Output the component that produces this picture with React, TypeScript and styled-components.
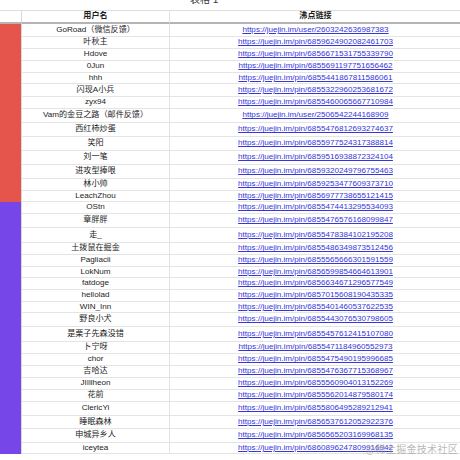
import React from "react";
import styled, { createGlobalStyle } from "styled-components";

const GlobalStyle = createGlobalStyle`
  html, body { margin: 0; padding: 0; background: #ffffff; overflow: hidden; }
  body { font-family: "Liberation Sans", "Noto Sans CJK SC", sans-serif; }
`;

type Entry = { name: string; url: string; h: number; group: "red" | "purple" };

const rows: Entry[] = [
  { name: "GoRoad（微信反馈）", url: "https://juejin.im/user/2603242636987383", h: 13, group: "red" },
  { name: "叶秋主", url: "https://juejin.im/pin/6859624902082461703", h: 12, group: "red" },
  { name: "Hdove", url: "https://juejin.im/pin/6856671531755339790", h: 12, group: "red" },
  { name: "0Jun", url: "https://juejin.im/pin/6855691197751656462", h: 12, group: "red" },
  { name: "hhh", url: "https://juejin.im/pin/6855441867811586061", h: 11, group: "red" },
  { name: "闪现A小兵", url: "https://juejin.im/pin/6855322960253681672", h: 13, group: "red" },
  { name: "zyx94", url: "https://juejin.im/pin/6855460065667710984", h: 12, group: "red" },
  { name: "Vam的金豆之路（邮件反馈）", url: "https://juejin.im/user/2506542244168909", h: 14, group: "red" },
  { name: "西红柿炒蛋", url: "https://juejin.im/pin/6855476812693274637", h: 14, group: "red" },
  { name: "笑阳", url: "https://juejin.im/pin/6855977524317388814", h: 14, group: "red" },
  { name: "刘一笔", url: "https://juejin.im/pin/6859516938872324104", h: 14, group: "red" },
  { name: "进攻型捧哏", url: "https://juejin.im/pin/6859320249796755463", h: 14, group: "red" },
  { name: "林小帅", url: "https://juejin.im/pin/6859253477609373710", h: 12, group: "red" },
  { name: "LeachZhou", url: "https://juejin.im/pin/6856977738655121415", h: 11, group: "red" },
  { name: "OStn", url: "https://juejin.im/pin/6855474413295534093", h: 12, group: "purple" },
  { name: "章胖胖", url: "https://juejin.im/pin/6855476576168099847", h: 14, group: "purple" },
  { name: "走_", url: "https://juejin.im/pin/6855478384102195208", h: 15, group: "purple" },
  { name: "土拨鼠在掘金", url: "https://juejin.im/pin/6855486349873512456", h: 12, group: "purple" },
  { name: "Pagliacii", url: "https://juejin.im/pin/6855565666301591559", h: 12, group: "purple" },
  { name: "LokNum", url: "https://juejin.im/pin/6856599854664613901", h: 11, group: "purple" },
  { name: "fatdoge", url: "https://juejin.im/pin/6856634671296577549", h: 12, group: "purple" },
  { name: "hellolad", url: "https://juejin.im/pin/6857015608190435335", h: 12, group: "purple" },
  { name: "WIN_Inn", url: "https://juejin.im/pin/6855401460537622535", h: 11, group: "purple" },
  { name: "野良小犬", url: "https://juejin.im/pin/6855443076530798605", h: 14, group: "purple" },
  { name: "是栗子先森没错", url: "https://juejin.im/pin/6855457612415107080", h: 15, group: "purple" },
  { name: "卜宁呀", url: "https://juejin.im/pin/6855471184960552973", h: 12, group: "purple" },
  { name: "chor", url: "https://juejin.im/pin/6855475490195996685", h: 12, group: "purple" },
  { name: "吉哈达", url: "https://juejin.im/pin/6855476367715368967", h: 12, group: "purple" },
  { name: "JIIllheon", url: "https://juejin.im/pin/6855560904013152269", h: 12, group: "purple" },
  { name: "花前", url: "https://juejin.im/pin/6855562014879580174", h: 12, group: "purple" },
  { name: "ClericYi", url: "https://juejin.im/pin/6855806495289212941", h: 14, group: "purple" },
  { name: "睡眠森林", url: "https://juejin.im/pin/6856537612052922376", h: 13, group: "purple" },
  { name: "申城异乡人", url: "https://juejin.im/pin/6856565203169968135", h: 14, group: "purple" },
  { name: "iceytea", url: "https://juejin.im/pin/6860896247809916942", h: 11, group: "purple" },
];

const groupColor = { red: "#e5554c", purple: "#7646e8" };

const Page = styled.div`
  position: relative;
  width: 460px;
  height: 460px;
  overflow: hidden;
  background: #fff;
`;

const Title = styled.div`
  height: 10px;
  padding-left: 190px;
  font-size: 10px;
  line-height: 10px;
  color: #333;
  overflow: hidden;
  & > span { transform: translateY(-5px); display: block; }
`;

const Table = styled.div`
  width: 462px;
  display: flex;
  flex-direction: column;
  font-size: 8.1px;
  color: #1c1c1c;
`;

const RowBox = styled.div<{ $h: number; $head?: boolean }>`
  display: grid;
  grid-template-columns: 22px 148px 1fr;
  height: ${(p) => p.$h}px;
  box-sizing: border-box;
  border-top: ${(p) => (p.$head ? "1px solid #dedede" : "none")};
`;

const Cell = styled.div<{ $head?: boolean }>`
  display: flex;
  align-items: center;
  justify-content: center;
  box-sizing: border-box;
  border-right: 1px solid #e2e2e2;
  border-bottom: ${(p) => (p.$head ? "2px solid #b4b4b4" : "1px solid #e4e4e4")};
  font-weight: ${(p) => (p.$head ? 700 : 400)};
  white-space: nowrap;
  overflow: hidden;
  line-height: 1;
`;

const ColorCell = styled.div<{ $color?: string }>`
  box-sizing: border-box;
  background: ${(p) => p.$color || "transparent"};
  border-right: 1px solid #d8d8d8;
  border-bottom: ${(p) => (p.$color ? "none" : "2px solid #b4b4b4")};
`;

const LinkText = styled.a`
  color: #3636dc;
  text-decoration: underline;
  text-underline-offset: 1px;
`;

const Watermark = styled.div`
  position: absolute;
  right: 2px;
  bottom: 4px;
  font-size: 10px;
  color: rgba(160, 160, 160, 0.75);
  font-family: "Noto Sans CJK SC", sans-serif;
  letter-spacing: 0.3px;
`;

export default function App() {
  return (
    <Page>
      <GlobalStyle />
      <Title>
        <span>表格 1</span>
      </Title>
      <Table>
        <RowBox $h={14} $head>
          <ColorCell />
          <Cell $head>用户名</Cell>
          <Cell $head>沸点链接</Cell>
        </RowBox>
        {rows.map((r) => (
          <RowBox key={r.url} $h={r.h}>
            <ColorCell $color={groupColor[r.group]} />
            <Cell>{r.name}</Cell>
            <Cell>
              <LinkText href="#">{r.url}</LinkText>
            </Cell>
          </RowBox>
        ))}
      </Table>
      <Watermark>@稀土掘金技术社区</Watermark>
    </Page>
  );
}
